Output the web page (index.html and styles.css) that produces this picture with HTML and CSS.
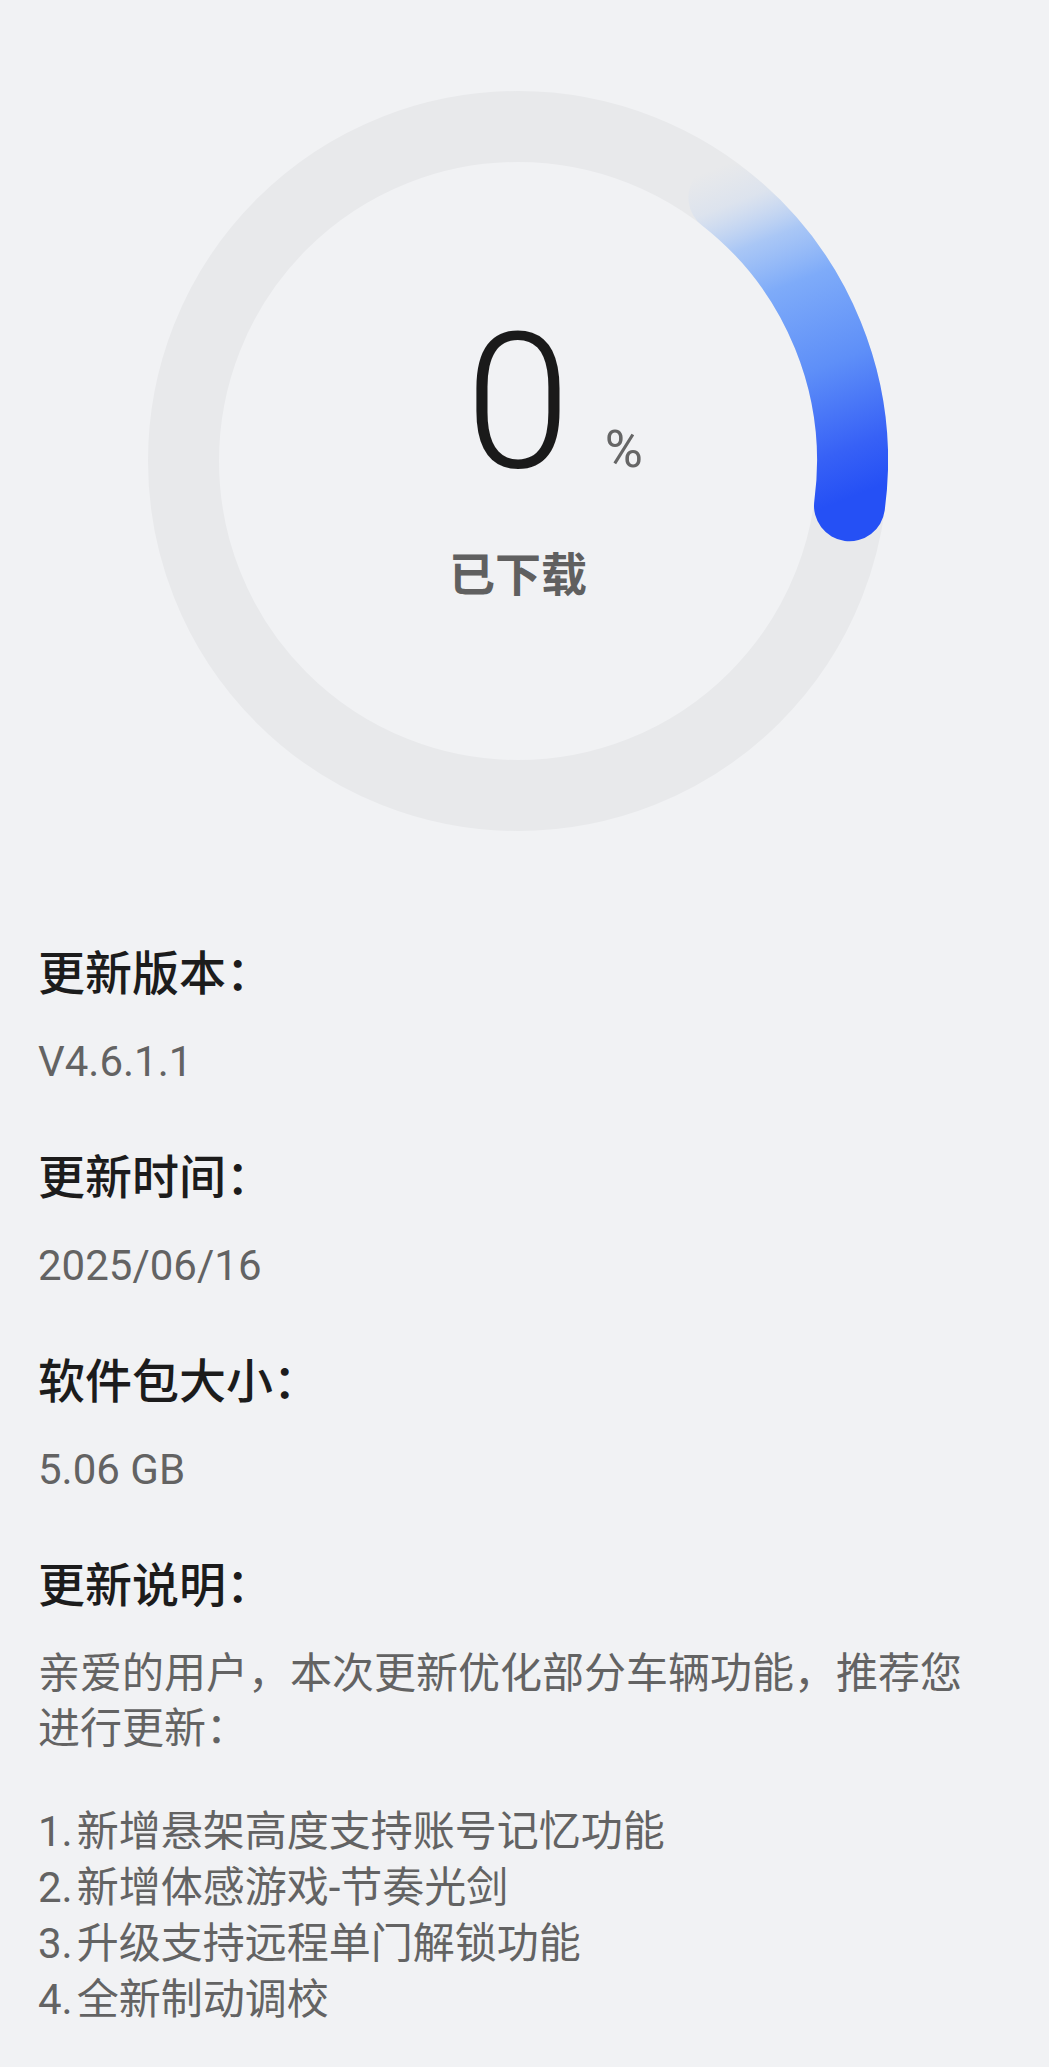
FILE: index.html
```html
<!DOCTYPE html>
<html>
<head>
  <title>软件更新</title>
  <meta name="viewport" content="width=device-width, initial-scale=1">
  <link rel="stylesheet" href="styles.css">
</head>
<body>

  <div class="hero">
    <div class="ring">
      <svg class="ring-svg" viewBox="0 0 740 740" width="740" height="740">
        <defs>
          <linearGradient id="arc-grad" gradientUnits="userSpaceOnUse" x1="560" y1="80" x2="702" y2="440">
            <stop offset="0" stop-color="#b4cff8" stop-opacity="0"/>
            <stop offset="0.1" stop-color="#aecbf8" stop-opacity="0.2"/>
            <stop offset="0.22" stop-color="#94bbf9" stop-opacity="0.75"/>
            <stop offset="0.35" stop-color="#7eabf9"/>
            <stop offset="0.58" stop-color="#5e8ff8"/>
            <stop offset="0.8" stop-color="#3761f6"/>
            <stop offset="0.92" stop-color="#2550f5"/>
            <stop offset="1" stop-color="#2550f5"/>
          </linearGradient>
        </defs>
        <circle cx="370" cy="370" r="334.5" fill="none" stroke="#e8e9eb" stroke-width="71"/>
        <path d="M575.9 106.4 A334.5 334.5 0 0 1 701.5 414.8" fill="none" stroke="url(#arc-grad)" stroke-width="71" stroke-linecap="round"/>
      </svg>

      <div class="ring-text">
        <div class="percent-row">
          <span></span>
          <span class="percent-num">0</span>
          <span class="percent-sign">%</span>
        </div>
        <p class="percent-label">已下载</p>
      </div>
    </div>
  </div>

  <div class="info">
    <div class="info-item">
      <p class="info-title">更新版本：</p>
      <p class="info-value">V4.6.1.1</p>
    </div>
    <div class="info-item">
      <p class="info-title">更新时间：</p>
      <p class="info-value">2025/06/16</p>
    </div>
    <div class="info-item">
      <p class="info-title">软件包大小：</p>
      <p class="info-value">5.06 GB</p>
    </div>
    <div class="info-item">
      <p class="info-title">更新说明：</p>
      <p class="info-text">亲爱的用户，本次更新优化部分车辆功能，推荐您进行更新：</p>
      <div class="info-list">
        <p><span class="num">1.</span>新增悬架高度支持账号记忆功能</p>
        <p><span class="num">2.</span>新增体感游戏-节奏光剑</p>
        <p><span class="num">3.</span>升级支持远程单门解锁功能</p>
        <p><span class="num">4.</span>全新制动调校</p>
      </div>
    </div>
  </div>

</body>
</html>
```

FILE: styles.css
```css
body {
  background-color: #f1f2f4;
  color: #1c1c1c;
  font-family: Roboto, "Noto Sans CJK SC", sans-serif;
  margin: 0;
}

p {
  margin: 0;
}

.hero {
  display: flex;
  justify-content: center;
  padding-top: 91px;
  padding-right: 13px;
}

.ring {
  display: grid;
  width: 740px;
  height: 740px;
}

.ring-svg,
.ring-text {
  grid-area: 1 / 1;
}

.ring-svg {
  display: block;
}

.ring-text {
  padding-top: 216px;
  text-align: center;
}

.percent-row {
  display: grid;
  grid-template-columns: 1fr auto 1fr;
  align-items: baseline;
}

.percent-num {
  font-family: Roboto, sans-serif;
  font-weight: 300;
  font-size: 190px;
  line-height: 1;
  color: #1a1a1a;
}

.percent-sign {
  justify-self: start;
  margin-left: 34px;
  font-size: 52px;
  line-height: 1;
  color: #666666;
}

.percent-label {
  margin-top: 55px;
  font-size: 46px;
  line-height: 1;
  font-weight: bold;
  color: #606060;
}

.info {
  padding: 109px 60px 60px 38px;
}

.info-item {
  margin-bottom: 54px;
}

.info-title {
  font-size: 47px;
  line-height: 68px;
  font-weight: 500;
  color: #1c1c1c;
  margin-bottom: 26px;
}

.info-value {
  font-size: 42px;
  line-height: 56px;
  color: #636363;
}

.info-text {
  font-size: 42px;
  line-height: 55px;
  color: #636363;
}

.info-list {
  margin-top: 48px;
  font-size: 42px;
  line-height: 56px;
  color: #636363;
}

.num {
  margin-right: 4px;
}
```
